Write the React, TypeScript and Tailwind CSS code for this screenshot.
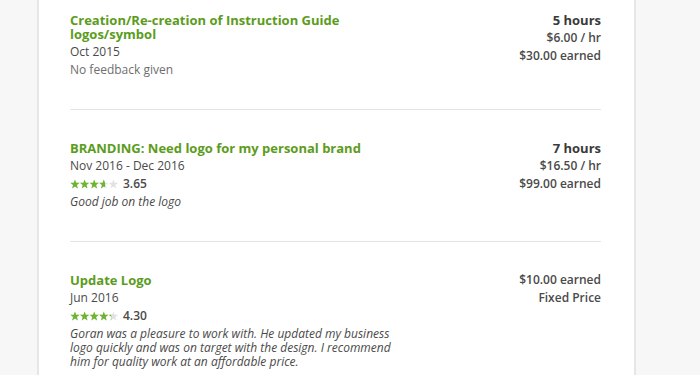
const FONT = "font-['Open_Sans',_'Liberation_Sans',_sans-serif]";

type Job = {
  title: string[];
  dates: string;
  rating?: number;
  feedback?: string;
  noFeedback?: boolean;
  right: { text: string; bold?: boolean }[];
};

const jobs: Job[] = [
  {
    title: ["Creation/Re-creation of Instruction Guide", "logos/symbol"],
    dates: "Oct 2015",
    noFeedback: true,
    right: [{ text: "5 hours", bold: true }, { text: "$6.00 / hr" }, { text: "$30.00 earned" }],
  },
  {
    title: ["BRANDING: Need logo for my personal brand"],
    dates: "Nov 2016 - Dec 2016",
    rating: 3.65,
    feedback: "Good job on the logo",
    right: [{ text: "7 hours", bold: true }, { text: "$16.50 / hr" }, { text: "$99.00 earned" }],
  },
  {
    title: ["Update Logo"],
    dates: "Jun 2016",
    rating: 4.3,
    feedback:
      "Goran was a pleasure to work with. He updated my business logo quickly and was on target with the design. I recommend him for quality work at an affordable price.",
    right: [{ text: "$10.00 earned" }, { text: "Fixed Price" }],
  },
];

const STAR = "5,0.4 6.2,3.7 9.7,3.8 6.9,5.9 7.9,9.4 5,7.4 2.1,9.4 3.1,5.9 0.3,3.8 3.8,3.7";

function Stars({ value, id }: { value: number; id: string }) {
  const w = (value / 5) * 48;
  return (
    <svg width="48" height="10" viewBox="0 0 48 10">
      <defs>
        <clipPath id={id}>
          <rect x="0" y="0" width={w} height="10" />
        </clipPath>
      </defs>
      {[0, 1, 2, 3, 4].map((i) => (
        <polygon key={i} points={STAR} transform={`translate(${i * 9.6},0)`} fill="#e2e2e2" />
      ))}
      <g clipPath={`url(#${id})`}>
        {[0, 1, 2, 3, 4].map((i) => (
          <polygon key={i} points={STAR} transform={`translate(${i * 9.6},0)`} fill="#6cb52d" />
        ))}
      </g>
    </svg>
  );
}

export default function App() {
  return (
    <div className={`flex w-[700px] h-[375px] overflow-hidden bg-[#f7f7f7] ${FONT}`}>
      <div className="w-[37px] shrink-0" />
      {/* card */}
      <div className="w-[599px] shrink-0 bg-white border-x-2 border-[#e6e6e6] pl-[31px] pr-[33px]">
        {jobs.map((job, idx) => (
          <div
            key={idx}
            className={`flex justify-between ${idx === 0 ? "pt-[13px] pb-[32px]" : "pt-[31px] pb-[32px]"} ${
              idx < jobs.length - 1 ? "border-b border-[#e4e4e4]" : ""
            }`}
          >
            <div className="w-[340px] flex flex-col">
              <div className="text-[13px] leading-[14px] font-bold text-[#5b9c20]">
                {job.title.map((t) => (
                  <div key={t}>{t}</div>
                ))}
              </div>
              <div className="mt-[4px] text-[12px] leading-[14px] text-[#4a4a4a]">{job.dates}</div>
              {job.rating !== undefined && (
                <div className="mt-[4px] flex items-center gap-[5px] h-[14px]">
                  <Stars value={job.rating} id={`s${idx}`} />
                  <span className="text-[12px] leading-[14px] font-semibold text-[#4a4a4a]">
                    {job.rating.toFixed(2)}
                  </span>
                </div>
              )}
              {job.noFeedback && (
                <div className="mt-[4px] text-[12px] leading-[14px] text-[#6e6e6e]">No feedback given</div>
              )}
              {job.feedback && (
                <div className="mt-[4px] text-[12px] leading-[14px] italic text-[#4a4a4a]">{job.feedback}</div>
              )}
            </div>
            <div className="flex flex-col items-end gap-[4px] text-[12px] leading-[14px] text-[#4a4a4a] font-semibold">
              {job.right.map((r) => (
                <div key={r.text} className={r.bold ? "text-[13px] font-bold text-[#3a3a3a]" : ""}>
                  {r.text}
                </div>
              ))}
            </div>
          </div>
        ))}
      </div>
    </div>
  );
}
